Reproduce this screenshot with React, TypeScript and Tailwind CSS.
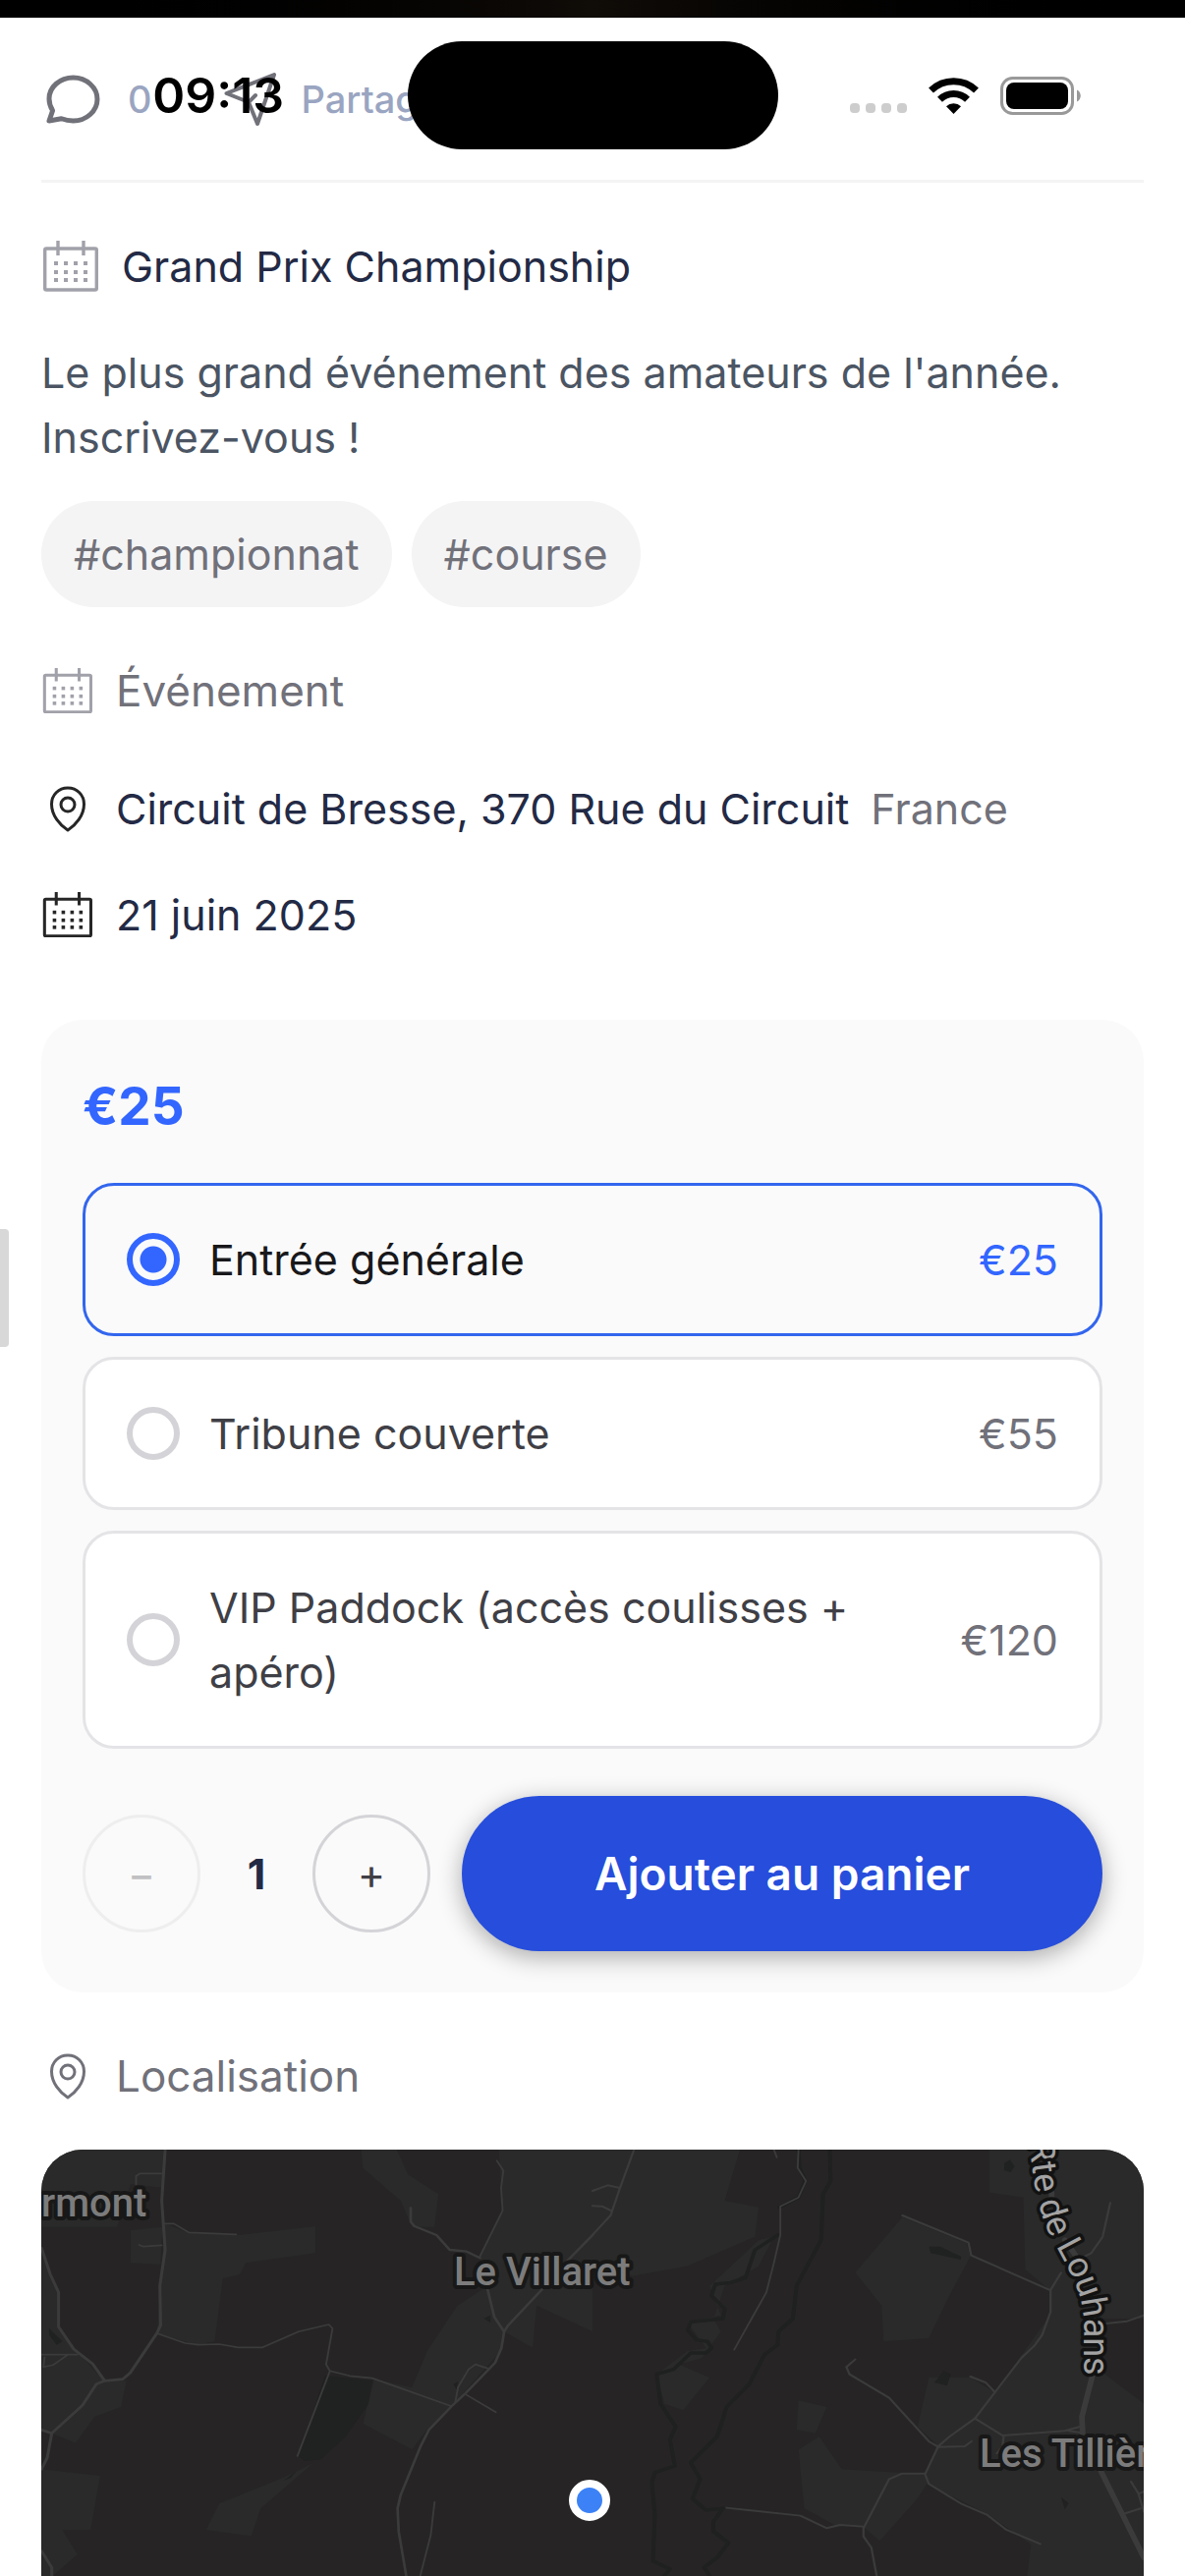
import { useState, type ReactNode } from "react";

type IconProps = { className?: string };

function CommentIcon({ className }: IconProps) {
  return (
    <svg viewBox="0 0 56 50" className={className} fill="none" stroke="currentColor" strokeWidth="5" strokeLinejoin="round" aria-hidden="true">
      <path d="M28.500 3C15 3 4 12.500 4 24.500c0 4.500 1.300 8.500 3.600 12L4 47l12.500-2.300c3.500 1.400 7.500 2.300 12 2.300C42 47 53 37 53 25S42 3 28.500 3Z" />
    </svg>
  );
}

function SendIcon({ className }: IconProps) {
  return (
    <svg viewBox="0 0 56 56" className={className} fill="none" stroke="currentColor" strokeWidth="4" strokeLinejoin="round" strokeLinecap="round" aria-hidden="true">
      <path d="M52 3 3.500 22 26 31l9 22L52 3ZM26 31l7-7" />
    </svg>
  );
}

function CalendarIcon({ className }: IconProps) {
  const columns = [13, 23, 33, 43];
  const rows = [23, 32, 40];
  return (
    <svg viewBox="-2 0 58 52" className={className} fill="none" stroke="currentColor" strokeWidth="3.400" aria-hidden="true">
      <rect x="1.700" y="8" width="52.600" height="42" rx="1.500" />
      <path d="M15 0v15M41 0v15" />
      <g fill="currentColor" stroke="none">
        {rows.map((y) => columns.map((x) => <rect key={`${x}-${y}`} x={x - 2} y={y - 2} width="4" height="4" />))}
      </g>
    </svg>
  );
}

function PinIcon({ className }: IconProps) {
  return (
    <svg viewBox="-1 0 52 48" className={className} fill="none" stroke="currentColor" strokeWidth="3" strokeLinejoin="round" aria-hidden="true">
      <path d="M26 3C16.500 3 9.500 10 9.500 19.500 9.500 31 18 41 26 46c8-5 16.500-15 16.500-26.500C42.500 10 35.500 3 26 3Z" />
      <circle cx="26" cy="20" r="7" />
    </svg>
  );
}

function WifiIcon() {
  return (
    <svg viewBox="0 0 51 37" className="h-[37px] w-[51px]" fill="none" stroke="currentColor" strokeWidth="7" aria-hidden="true">
      <path d="M2.500 13a33 33 0 0 1 46 0M11.500 22.300a20 20 0 0 1 28 0" />
      <path d="M25.500 37 18 29.300a10.800 10.800 0 0 1 15 0Z" fill="currentColor" stroke="none" />
    </svg>
  );
}

function BatteryIcon() {
  return (
    <svg viewBox="0 0 82 39" className="h-[39px] w-[82px]" aria-hidden="true">
      <rect x="1.500" y="1.500" width="72" height="36" rx="11" fill="none" stroke="#999" strokeWidth="3" />
      <rect x="6" y="6" width="63" height="27" rx="8" />
      <path d="M78 13.500c5 2 5 10 0 12Z" fill="#999" />
    </svg>
  );
}

function StatusBar() {
  return (
    <div className="pointer-events-none absolute inset-x-0 top-0 grid h-[194px] grid-cols-[1fr_auto_1fr] items-center text-black">
      <div className="pl-[30px] text-center text-[50px] font-semibold">09:13</div>
      <div className="h-[110px] w-[377px] rounded-full bg-black" />
      <div className="flex items-center justify-end gap-[22px] pr-[106px]">
        <div className="flex gap-[6px] pt-[26px]">
          {[0, 1, 2, 3].map((dot) => (
            <span key={dot} className="size-[10px] rounded-[4px] bg-[#cdcdcd]" />
          ))}
        </div>
        <WifiIcon />
        <BatteryIcon />
      </div>
    </div>
  );
}

function InfoRow({ icon, children, className }: { icon: ReactNode; children: ReactNode; className: string }) {
  return (
    <div className={className}>
      {icon}
      <div className="flex flex-wrap gap-x-[22px]">{children}</div>
    </div>
  );
}

const TICKETS = [
  { id: "general", label: "Entrée générale", price: 25 },
  { id: "covered", label: "Tribune couverte", price: 55 },
  { id: "vip", label: "VIP Paddock (accès coulisses + apéro)", price: 120 },
];

function TicketCard() {
  const [selected, setSelected] = useState("general");
  const [quantity, setQuantity] = useState(1);
  const current = TICKETS.find((t) => t.id === selected) ?? TICKETS[0];
  return (
    <section className="mt-[74px] rounded-[42px] bg-[#fafafa] p-[42px]">
      <p className="mb-[32px] text-[53px] font-bold leading-[92px] text-[#3366ff]">€{current.price}</p>
      <fieldset aria-label="Billets" className="flex flex-col gap-[21px]">
        {TICKETS.map((t) => (
          <label
            key={t.id}
            className="group flex items-center gap-[30px] rounded-[32px] border-3 border-[#e4e4e7] bg-white px-[42px] py-[42px] text-[#3f3f46] has-checked:border-[#3366ee] has-checked:bg-[#fafafa] has-checked:text-[#18181b]"
          >
            <input
              type="radio"
              name="ticket"
              checked={t.id === selected}
              onChange={() => setSelected(t.id)}
              className="size-[54px] shrink-0 appearance-none rounded-full border-6 border-[#d4d4d8] checked:border-[#3366ff] checked:bg-[radial-gradient(circle,#3366ff_13px,#fafafa_14px)]"
            />
            <span className="flex-1">{t.label}</span>
            <span className="text-[#71717a] group-has-checked:text-[#3366ff]">€{t.price}</span>
          </label>
        ))}
      </fieldset>
      <div className="mt-[48px] flex items-center">
        <button
          type="button"
          aria-label="Diminuer"
          disabled={quantity === 1}
          onClick={() => setQuantity(quantity - 1)}
          className="size-[120px] shrink-0 rounded-full border-3 border-[#d4d4d8] text-[#3f3f46] disabled:opacity-30"
        >
          −
        </button>
        <output className="w-[114px] shrink-0 text-center font-bold text-[#232a45]">{quantity}</output>
        <button
          type="button"
          aria-label="Augmenter"
          onClick={() => setQuantity(quantity + 1)}
          className="size-[120px] shrink-0 rounded-full border-3 border-[#d4d4d8] text-[#3f3f46]"
        >
          +
        </button>
        <button
          type="button"
          className="ml-[32px] h-[158px] flex-1 rounded-full bg-[#264ddb] text-[46px] font-semibold text-white shadow-[0_6px_24px_rgba(0,0,0,0.32)]"
        >
          Ajouter au panier
        </button>
      </div>
    </section>
  );
}

/* Road and field shapes are drafted on two stretched half-map sheets. */
const SHEET_WEST = "translate(-42 -28) scale(0.3846 0.3333)";
const SHEET_EAST = "translate(561 -28) scale(0.3846 0.3333)";

function EventMap() {
  return (
    <div className="relative min-h-[300px] flex-1 overflow-hidden rounded-t-[42px] bg-[#262425]">
      <svg viewBox="0 0 1122 434" preserveAspectRatio="xMidYMin slice" className="absolute inset-0 size-full" role="img" aria-label="Carte de la localisation">
        <g fill="#292a29">
          <g transform={SHEET_WEST}>
            <path d="M435 310 500 338 630 345 835 318 835 400 650 430 635 465 590 478 568 670 520 680 415 645 425 500ZM345 330 430 320 425 435 345 430Z" />
            <path d="M110 84H432L430 200 345 190 310 320H110ZM110 400 155 520 155 625 205 700 275 790 335 790 320 870 250 900 200 980 137 950 110 940Z" />
            <path d="M955 84 1050 84 1080 160 1160 220 1150 320 1090 320 1060 240 960 140ZM1320 84H1568V640L1420 560 1410 690 1334 640 1325 700 1195 868 1130 940 1090 1000 960 920 990 785 1090 810 1130 700 1210 560 1290 500 1270 410 1330 270Z" />
            <path d="M750 1085 830 1040 690 1180 665 1265 545 1245 580 1165ZM110 1060 265 1080 240 1245 165 1245 205 1320 140 1386H110Z" />
          </g>
          <g transform={SHEET_EAST}>
            <path d="M0 84H390L350 240 440 260 430 350 250 440 105 470 0 420ZM820 290 990 370 1000 410 940 540 890 660 770 670 765 560 695 460Z" />
            <path d="M1050 84H1459V600H1340L1345 760 1459 860V1386H1150L1160 1290 1050 1200 885 1105 860 1150 760 1280 720 1240 640 1230 560 1180 545 1000 600 960 660 1060 880 1075 915 990 860 930 890 780 1000 780 1065 825 1130 720 1210 590 1212 515 1145 450 1140 230 1050 215ZM545 850 620 870 590 950 540 940Z" />
            <path d="M440 360 480 350 440 440 350 500 320 600 340 640 290 720 230 740 310 780 240 880 190 860 170 770 250 700 300 690 250 610 340 590 310 500Z" />
          </g>
        </g>
        <g fill="none" stroke="#1f2020" strokeLinejoin="round" strokeLinecap="round">
          <g transform={SHEET_WEST}>
            <path d="M860 775 985 790 975 860 915 960 850 1030 805 1035 790 1020ZM750 1095 785 1065 770 1085Z" fill="#202121" stroke="none" />
            <path d="M130 630 165 670 150 680 130 650ZM1280 600l18-10v22ZM1200 800l12-8-4 25Z" fill="#202121" stroke="none" />
          </g>
          <g transform={SHEET_EAST} strokeWidth="10">
            <path d="M490 345 430 390 405 475 365 490 325 495 315 530 350 570 345 600 260 610 252 635 275 665 305 670 315 690 300 705 260 705 215 755 170 770 180 860 220 930 205 970 218 1050 165 1070 157 1100 165 1200 160 1340 205 1365 190 1386" />
            <path d="M628 84 630 180 610 220 605 360 540 500 530 600 492 640 490 680 455 710 415 800 355 870 330 960 260 1040 285 1090 265 1150 300 1185 345 1180 320 1220 320 1250 360 1285 330 1330 295 1360 310 1386" />
            <path d="M545 84 548 140 563 180 545 230 495 260" />
            <path d="M890 380h30l55 30v10l-80-20ZM905 795l25-35 18 10-10 35ZM1090 125l15-10 12 20-10 18-18-6ZM1240 1145l20 18-10 20Z" fill="#202121" stroke="none" />
          </g>
        </g>
        <g fill="none" stroke="#3b3b3b" strokeWidth="8" strokeLinejoin="round" strokeLinecap="round">
          <g transform={SHEET_WEST}>
            <path d="M437 84 428 240 437 390 423 500 425 620 415 645 345 765 325 785 277 790 255 800 218 865 137 950 125 1025 110 1060M110 385 133 465 155 520 155 625 195 693 245 738 277 790M110 940 137 950M110 1310 137 1360V1386" />
            <path d="M1568 345 1500 425M1435 510 1345 620 1334 640 1327 690 1310 735 1230 830 1195 868 1135 940 1113 990 1060 1140 1052 1180 1055 1250 1075 1386M1087 262V305L1097 318 1155 345 1190 390 1235 395 1270 415M1290 510 1308 595 1334 640" strokeWidth="7" />
            <path d="M415 645 490 675 525 680 580 678 630 688 695 688 790 640 870 618 880 630 863 740 873 760 925 775 985 782 1195 868M873 760 787 1020M433 310H460L500 337 625 343M428 157H370L360 165V190M368 375 380 380 428 376M110 710H205M180 710 140 742 115 748 118 718" strokeWidth="5" />
            <path d="M1315 118 1332 148 1326 200 1330 270 1270 410M1205 855 1212 810 1240 755 1258 740 1290 752M1230 830 1312 886M1150 1160 1140 1260 1112 1386" strokeWidth="5" />
          </g>
          <g transform={SHEET_EAST}>
            <path d="M110 84 70 210 48 285 0 345M0 210 40 193 70 200M0 256 25 257 48 270" strokeWidth="6" />
            <path d="M545 84 543 140 565 180 545 230 497 257 497 345 480 430 460 520 375 695M480 84 488 108" strokeWidth="5" />
            <path d="M820 285 995 368 1002 407 1210 513M1240 460 1212 513 1212 580 1190 650 1170 682 1135 720 1065 825 1012 905 945 960 915 990 880 1075 890 1105 975 1165 1045 1200 1095 1245 1185 1288M1000 777 1040 795 1065 825M695 725 672 748 680 770 785 842 890 975 915 992 985 990 1003 975M880 1073 820 1073 785 1090 717 1240 717 1265 738 1300 752 1386M355 1178 550 1202 620 1240 655 1230 715 1235" strokeWidth="6" />
            <path d="M1012 905 1085 957 1250 943 1290 930M1260 943 1292 948M1088 960 1085 990 1070 1012M1370 247 1350 350 1320 400 1285 420M1340 617 1415 608 1459 590M1425 1098 1445 1135 1459 1190M1445 1135 1459 1128M1410 1195 1450 1180" strokeWidth="6" />
            <path d="M1325 765 1295 900 1297 950M1345 1065 1459 1330M1215 215 1215 235M1250 360 1280 410" strokeWidth="15" />
          </g>
        </g>
        <g fill="#7c7c7c" stroke="#181818" strokeWidth="8" strokeLinejoin="round" className="font-['Roboto'] text-[40px] font-medium [paint-order:stroke]">
          <text x="0" y="68">rmont</text>
          <text x="420" y="138">Le Villaret</text>
          <text x="955" y="323">Les Tillières</text>
        </g>
        <path id="louhans" d="M1005 -8L1010 30C1015 60 1022 82 1036 104 1051 132 1061 150 1061 180V270" fill="none" />
        <text fill="#a3a3a3" stroke="#121212" strokeWidth="7" strokeLinejoin="round" className="font-['Roboto'] text-[36px] [paint-order:stroke]">
          <textPath href="#louhans">Rte de Louhans</textPath>
        </text>
        <circle cx="558" cy="357" r="17" fill="#3c82f6" stroke="#fff" strokeWidth="8" />
      </svg>
    </div>
  );
}

export default function App() {
  return (
    <div className="relative flex min-h-screen flex-col overflow-hidden bg-white font-['Inter',sans-serif] text-[43px] leading-[66px] text-[#232a45]">
      <div className="h-[18px] bg-linear-to-r from-black via-[#100c08] to-black" />
      <main className="flex flex-1 flex-col px-[42px]">
        <div className="flex h-[168px] items-center border-b-3 border-[#f4f4f5] text-[38px] font-medium text-[#9aa5c1]">
          <button type="button" className="flex items-center gap-[28px]" aria-label="0 commentaires">
            <CommentIcon className="ml-[4px] h-[50px] w-[56px] text-[#71717a]" />
            <span>0</span>
          </button>
          <button type="button" className="ml-[72px] flex items-center gap-[24px]">
            <SendIcon className="size-[56px] text-[#71717a]" />
            Partager
          </button>
        </div>

        <h1 className="mt-[52px] flex items-center gap-[24px]">
          <CalendarIcon className="h-[52px] w-[58px] text-[#a1a1aa]" />
          Grand Prix Championship
        </h1>
        <p className="mt-[42px] text-[#4b5563]">
          Le plus grand événement des amateurs de l'année. Inscrivez-vous !
        </p>
        <ul className="mt-[32px] flex flex-wrap gap-[20px] text-[#71717a]">
          {["#championnat", "#course"].map((tag) => (
            <li key={tag} className="rounded-full bg-[#f4f4f5] px-[33px] py-[21px]">{tag}</li>
          ))}
        </ul>

        <InfoRow className="mt-[52px] flex items-center gap-[24px] text-[44px] text-[#71717a]" icon={<CalendarIcon className="w-[52px] text-[#a1a1aa]" />}>
          Événement
        </InfoRow>
        <InfoRow className="mt-[54px] flex items-center gap-[24px]" icon={<PinIcon className="w-[52px] text-[#262626]" />}>
          <span>Circuit de Bresse, 370 Rue du Circuit</span>
          <span className="text-[#71717a]">France</span>
        </InfoRow>
        <InfoRow className="mt-[42px] flex items-center gap-[24px]" icon={<CalendarIcon className="w-[52px] text-[#262626]" />}>
          21 juin 2025
        </InfoRow>

        <TicketCard />

        <h2 className="mt-[52px] mb-[42px] flex items-center gap-[24px] text-[44px] text-[#71717a]">
          <PinIcon className="w-[52px]" />
          Localisation
        </h2>
        <EventMap />
      </main>
      <div className="absolute left-0 top-[1251px] h-[120px] w-[9px] rounded-r-[4px] bg-[#d8d8d8]" />
      <StatusBar />
    </div>
  );
}
